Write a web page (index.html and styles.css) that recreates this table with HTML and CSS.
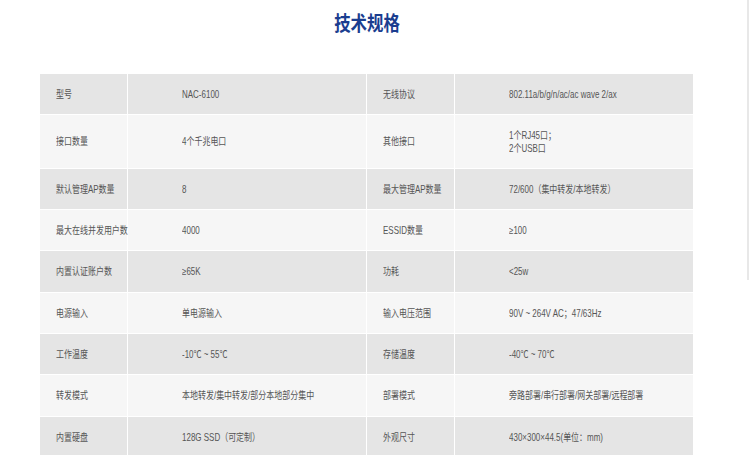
FILE: index.html
```html
<!DOCTYPE html>
<html lang="zh">
<head>
<meta charset="utf-8">
<title>技术规格</title>
<link rel="stylesheet" href="styles.css">
</head>
<body>
<div class="page">
  <h2 class="title"><span class="title-text">技术规格</span></h2>
  <table class="spec">
    <colgroup>
      <col class="c-label"><col class="c-value"><col class="c-label2"><col class="c-value">
    </colgroup>
    <tbody>
      <tr class="odd"><td class="lbl"><span class="t">型号</span></td><td class="val"><span class="t">NAC-6100</span></td><td class="lbl"><span class="t">无线协议</span></td><td class="val"><span class="t">802.11a/b/g/n/ac/ac wave 2/ax</span></td></tr>
      <tr class="even"><td class="lbl"><span class="t">接口数量</span></td><td class="val"><span class="t">4个千兆电口</span></td><td class="lbl"><span class="t">其他接口</span></td><td class="val"><span class="t">1个RJ45口；<br>2个USB口</span></td></tr>
      <tr class="odd"><td class="lbl"><span class="t">默认管理AP数量</span></td><td class="val"><span class="t">8</span></td><td class="lbl"><span class="t">最大管理AP数量</span></td><td class="val"><span class="t">72/600（集中转发/本地转发）</span></td></tr>
      <tr class="even"><td class="lbl"><span class="t">最大在线并发用户数</span></td><td class="val"><span class="t">4000</span></td><td class="lbl"><span class="t">ESSID数量</span></td><td class="val"><span class="t">≥100</span></td></tr>
      <tr class="odd"><td class="lbl"><span class="t">内置认证账户数</span></td><td class="val"><span class="t">≥65K</span></td><td class="lbl"><span class="t">功耗</span></td><td class="val"><span class="t">&lt;25w</span></td></tr>
      <tr class="even"><td class="lbl"><span class="t">电源输入</span></td><td class="val"><span class="t">单电源输入</span></td><td class="lbl"><span class="t">输入电压范围</span></td><td class="val"><span class="t">90V ~ 264V AC；47/63Hz</span></td></tr>
      <tr class="odd"><td class="lbl"><span class="t">工作温度</span></td><td class="val"><span class="t">-10℃ ~ 55℃</span></td><td class="lbl"><span class="t">存储温度</span></td><td class="val"><span class="t">-40℃ ~ 70℃</span></td></tr>
      <tr class="even"><td class="lbl"><span class="t">转发模式</span></td><td class="val"><span class="t">本地转发/集中转发/部分本地部分集中</span></td><td class="lbl"><span class="t">部署模式</span></td><td class="val"><span class="t">旁路部署/串行部署/网关部署/远程部署</span></td></tr>
      <tr class="odd"><td class="lbl"><span class="t">内置硬盘</span></td><td class="val"><span class="t">128G SSD（可定制）</span></td><td class="lbl"><span class="t">外观尺寸</span></td><td class="val"><span class="t">430×300×44.5(单位：mm)</span></td></tr>
    </tbody>
  </table>
</div>
<div class="edge-line"></div>
</body>
</html>
```
FILE: styles.css
```css
html, body {
  margin: 0;
  padding: 0;
  background: #ffffff;
}
body {
  font-family: "Liberation Sans", "Noto Sans CJK SC", sans-serif;
  overflow: hidden;
}
.page {
  padding: 0 57px 0 40px;
  display: flex;
  flex-direction: column;
  align-items: stretch;
}
.title {
  margin: 10px 0 0 0;
  height: 64px;
  text-align: center;
  font-size: 20px;
  line-height: 26px;
  font-weight: 700;
  color: #1b3d8f;
  font-family: "Noto Sans CJK SC", sans-serif;
}
.title-text {
  display: inline-block;
  transform: scaleX(0.82);
}
.spec {
  width: 653px;
  table-layout: fixed;
  border-collapse: collapse;
  font-size: 10.5px;
  color: #555555;
}
.c-label { width: 87px; }
.c-label2 { width: 88px; }
.c-value { width: 239px; }
.spec td {
  padding: 14px 0 14px 0;
  line-height: 12.3px;
  border: 1px solid #ffffff;
  white-space: nowrap;
  vertical-align: middle;
}
.spec tr:first-child td { border-top: 0; }
.spec td:first-child { border-left: 0; }
.spec td:last-child { border-right: 0; }
.spec td.lbl { padding-left: 16px; }
.spec td.val { padding-left: 54px; }
.odd td { background: #e5e5e5; }
.even td { background: #f6f6f6; }
.t {
  display: inline-block;
  transform: scaleX(0.76);
  transform-origin: left center;
  font-family: "Liberation Sans", "Noto Sans CJK SC", sans-serif;
}
.edge-line {
  position: absolute;
  top: 0;
  right: 1px;
  width: 2px;
  height: 280px;
  background: #e8e8e8;
}
```
